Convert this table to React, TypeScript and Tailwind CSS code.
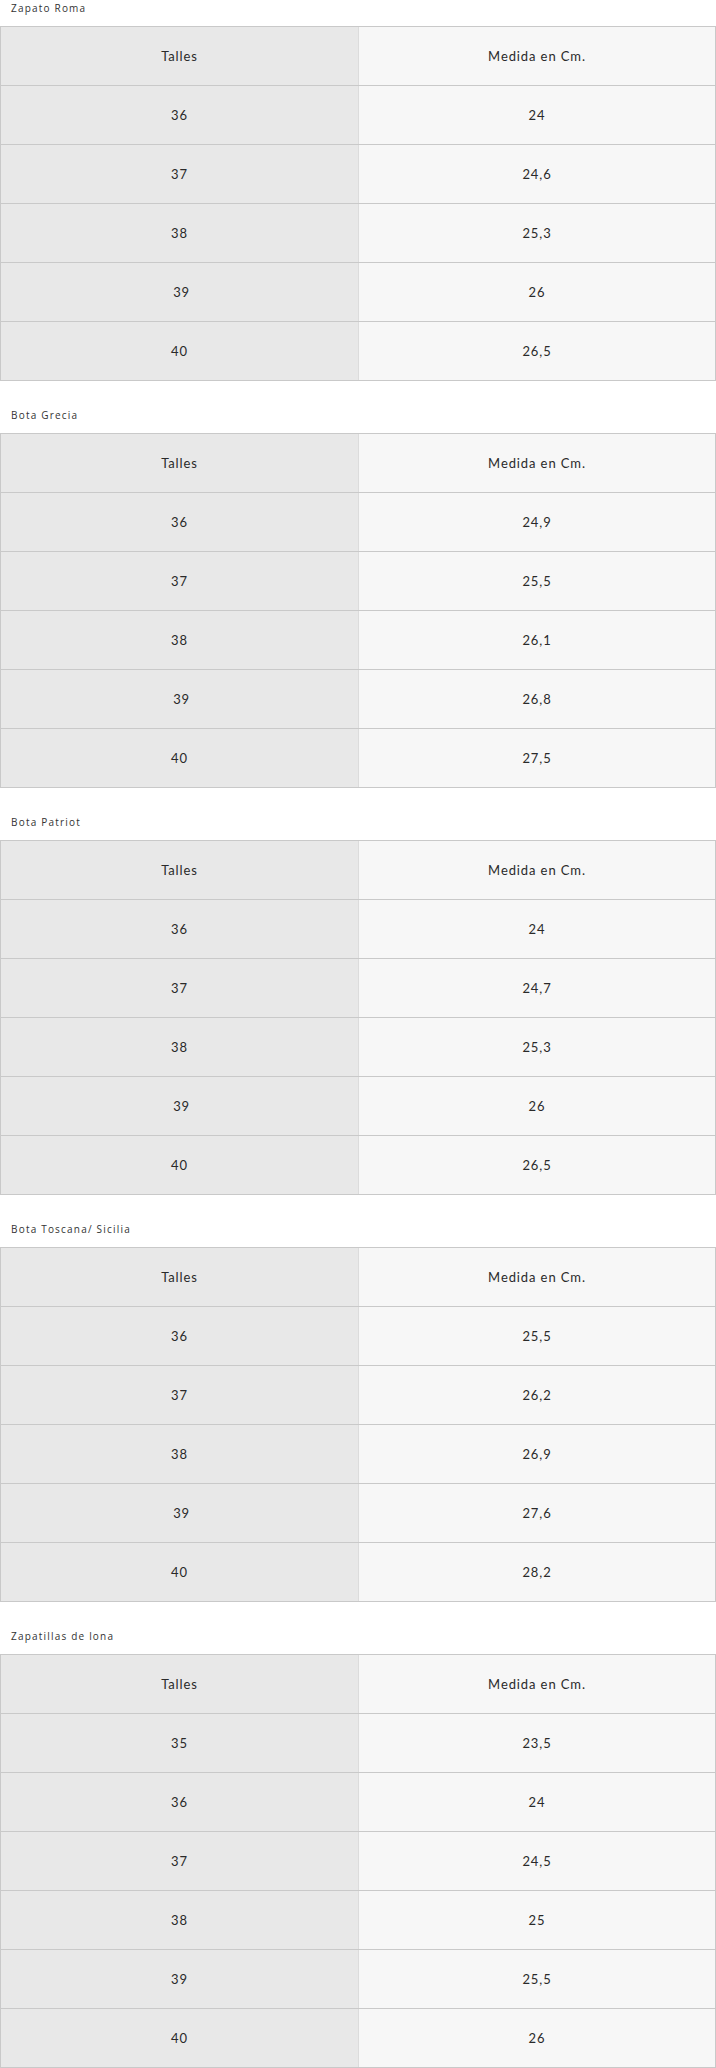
import React from "react";

type Section = { title: string; rows: [string, string][] };

const sections: Section[] = [
  {
    title: "Zapato Roma",
    rows: [
      ["36", "24"],
      ["37", "24,6"],
      ["38", "25,3"],
      ["\u00a039", "26"],
      ["40", "26,5"],
    ],
  },
  {
    title: "Bota Grecia",
    rows: [
      ["36", "24,9"],
      ["37", "25,5"],
      ["38", "26,1"],
      ["\u00a039", "26,8"],
      ["40", "27,5"],
    ],
  },
  {
    title: "Bota Patriot",
    rows: [
      ["36", "24"],
      ["37", "24,7"],
      ["38", "25,3"],
      ["\u00a039", "26"],
      ["40", "26,5"],
    ],
  },
  {
    title: "Bota Toscana/ Sicilia",
    rows: [
      ["36", "25,5"],
      ["37", "26,2"],
      ["38", "26,9"],
      ["\u00a039", "27,6"],
      ["40", "28,2"],
    ],
  },
  {
    title: "Zapatillas de lona",
    rows: [
      ["35", "23,5"],
      ["36", "24"],
      ["37", "24,5"],
      ["38", "25"],
      ["39", "25,5"],
      ["40", "26"],
    ],
  },
];

function Row({ left, right }: { left: string; right: string }) {
  return (
    <div className="flex h-[59px] border-t border-[#c9c9c9]">
      <div className="flex w-[358px] items-center justify-center border-l border-[#c9c9c9] bg-[#e8e8e8] pt-[2px] whitespace-pre">
        {left}
      </div>
      <div className="flex flex-1 items-center justify-center border-l border-r border-l-[#dcdcdc] border-r-[#c9c9c9] bg-[#f7f7f7] pt-[2px] whitespace-pre">
        {right}
      </div>
    </div>
  );
}

export default function App() {
  return (
    <div
      className="w-[716px] bg-white text-[#2a2a2a] antialiased"
      style={{ fontFamily: "Lato, 'Open Sans', sans-serif" }}
    >
      {sections.map((s, i) => (
        <div key={s.title} className={i === 0 ? "-mt-[2px]" : "mt-[24px]"}>
          <div
            className="mb-[8px] h-[20px] pl-[11px] text-[10px] font-normal leading-[20px] tracking-[1.2px] text-[#333]"
            style={{ fontFamily: "'Open Sans', sans-serif" }}
          >
            {s.title}
          </div>
          <div className="border-b border-[#c9c9c9] text-[13px] tracking-[0.9px]">
            <Row left="Talles" right="Medida en Cm." />
            {s.rows.map(([l, r], j) => (
              <Row key={j} left={l} right={r} />
            ))}
          </div>
        </div>
      ))}
    </div>
  );
}
